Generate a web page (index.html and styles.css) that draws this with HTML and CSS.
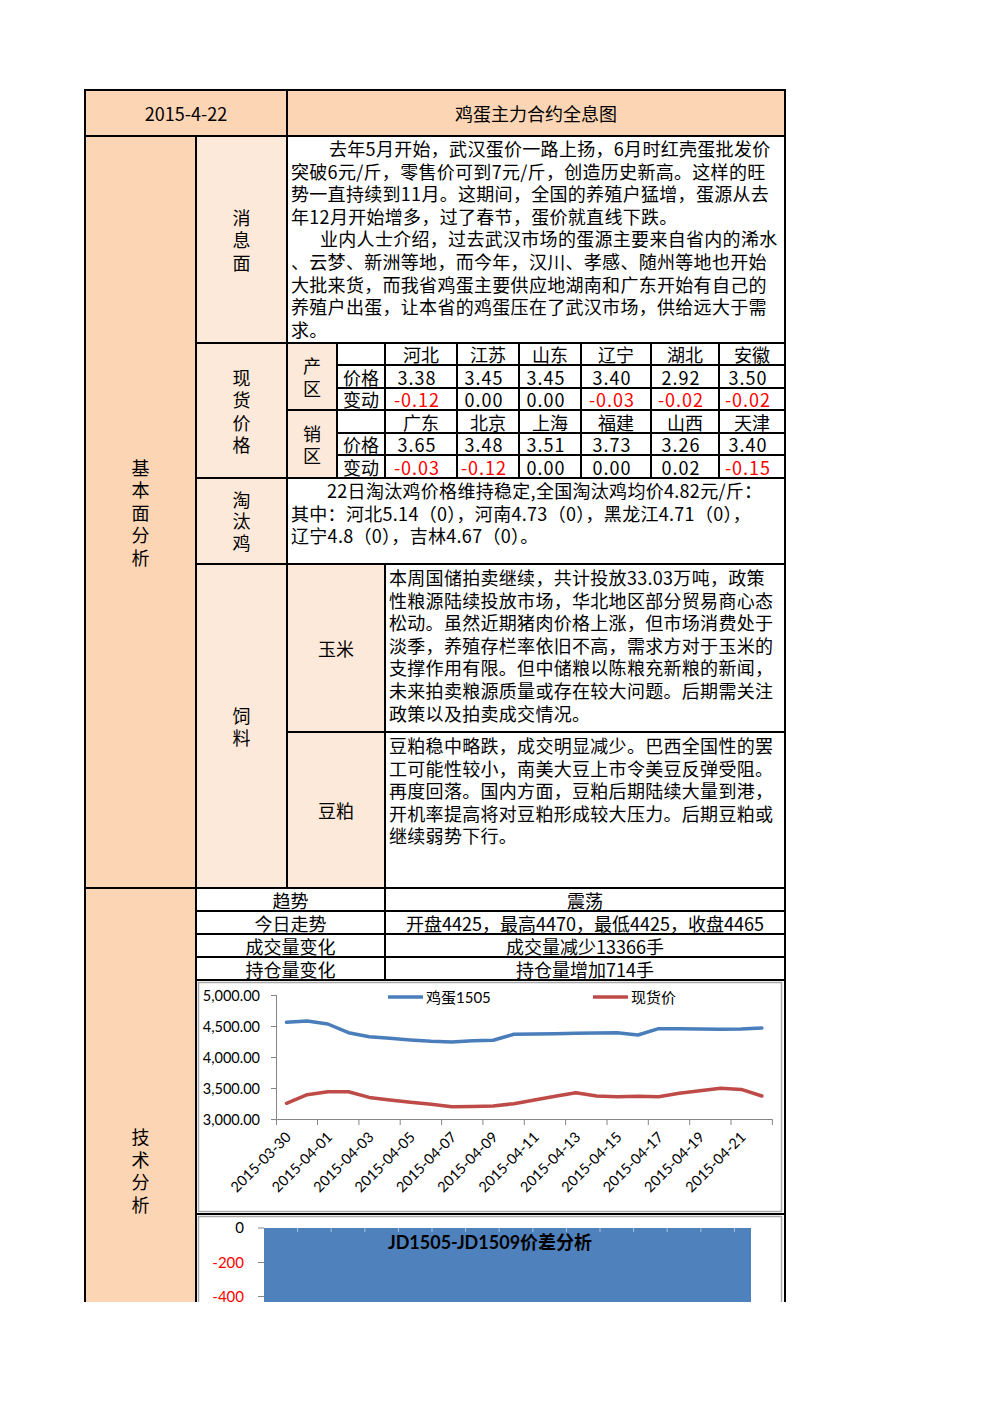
FILE: index.html
```html
<!DOCTYPE html>
<html lang="zh-CN">
<head>
<meta charset="utf-8">
<title>鸡蛋主力合约全息图</title>
<link rel="stylesheet" href="styles.css">
</head>
<body>
<div class="page">
<div class="clip">
<div class="sheet">
  <div class="c tan cs2">2015-4-22</div>
  <div class="c tan cs8">鸡蛋主力合约全息图</div>

  <div class="c tan rs10"><span class="v">基本面分析</span></div>
  <div class="c pale"><span class="v">消息面</span></div>
  <div class="c cs8 txt">
    <p class="i38">去年5月开始，武汉蛋价一路上扬，6月时红壳蛋批发价<br>突破6元/斤，零售价可到7元/斤，创造历史新高。这样的旺<br>势一直持续到11月。这期间，全国的养殖户猛增，蛋源从去<br>年12月开始增多，过了春节，蛋价就直线下跌。</p>
    <p class="i29">业内人士介绍，过去武汉市场的蛋源主要来自省内的浠水<br>、云梦、新洲等地，而今年，汉川、孝感、随州等地也开始<br>大批来货，而我省鸡蛋主要供应地湖南和广东开始有自己的<br>养殖户出蛋，让本省的鸡蛋压在了武汉市场，供给远大于需<br>求。</p>
  </div>

  <div class="c pale rs6"><span class="v">现货价格</span></div>
  <div class="c pale rs3"><span class="v">产区</span></div>
  <div class="c"></div>
  <div class="c">河北</div><div class="c">江苏</div><div class="c">山东</div><div class="c">辽宁</div><div class="c">湖北</div><div class="c">安徽</div>
  <div class="c">价格</div>
  <div class="c num">3.38</div><div class="c num">3.45</div><div class="c num">3.45</div><div class="c num">3.40</div><div class="c num">2.92</div><div class="c num">3.50</div>
  <div class="c">变动</div>
  <div class="c num neg">-0.12</div><div class="c num">0.00</div><div class="c num">0.00</div><div class="c num neg">-0.03</div><div class="c num neg">-0.02</div><div class="c num neg">-0.02</div>

  <div class="c pale rs3"><span class="v">销区</span></div>
  <div class="c"></div>
  <div class="c">广东</div><div class="c">北京</div><div class="c">上海</div><div class="c">福建</div><div class="c">山西</div><div class="c">天津</div>
  <div class="c">价格</div>
  <div class="c num">3.65</div><div class="c num">3.48</div><div class="c num">3.51</div><div class="c num">3.73</div><div class="c num">3.26</div><div class="c num">3.40</div>
  <div class="c">变动</div>
  <div class="c num neg">-0.03</div><div class="c num neg">-0.12</div><div class="c num">0.00</div><div class="c num">0.00</div><div class="c num">0.02</div><div class="c num neg">-0.15</div>

  <div class="c pale"><span class="v vs">淘汰鸡</span></div>
  <div class="c cs8 txt">
    <p class="i36">22日淘汰鸡价格维持稳定,全国淘汰鸡均价4.82元/斤：<br>其中：河北5.14（0），河南4.73（0），黑龙江4.71（0），<br>辽宁4.8（0），吉林4.67（0）。</p>
  </div>

  <div class="c pale rs2"><span class="v">饲料</span></div>
  <div class="c pale cs2">玉米</div>
  <div class="c cs6 txt">
    <p>本周国储拍卖继续，共计投放33.03万吨，政策<br>性粮源陆续投放市场，华北地区部分贸易商心态<br>松动。虽然近期猪肉价格上涨，但市场消费处于<br>淡季，养殖存栏率依旧不高，需求方对于玉米的<br>支撑作用有限。但中储粮以陈粮充新粮的新闻，<br>未来拍卖粮源质量或存在较大问题。后期需关注<br>政策以及拍卖成交情况。</p>
  </div>
  <div class="c pale cs2">豆粕</div>
  <div class="c cs6 txt">
    <p>豆粕稳中略跌，成交明显减少。巴西全国性的罢<br>工可能性较小，南美大豆上市令美豆反弹受阻。<br>再度回落。国内方面，豆粕后期陆续大量到港，<br>开机率提高将对豆粕形成较大压力。后期豆粕或<br>继续弱势下行。</p>
  </div>

  <div class="c tan rs6"><span class="v">技术分析</span></div>
  <div class="c cs3">趋势</div><div class="c cs6">震荡</div>
  <div class="c cs3">今日走势</div><div class="c cs6">开盘4425，最高4470，最低4425，收盘4465</div>
  <div class="c cs3">成交量变化</div><div class="c cs6">成交量减少13366手</div>
  <div class="c cs3">持仓量变化</div><div class="c cs6">持仓量增加714手</div>

  <div class="c cs9 chart">
    <svg width="587" height="232" viewBox="0 0 587 232">
      <rect x="1.5" y="1.5" width="583" height="229" fill="#fff" stroke="#a9a9a9" stroke-width="1.5"/>
      <g stroke="#868686" stroke-width="1">
        <line x1="79.5" y1="14" x2="79.5" y2="138.5"/>
        <line x1="74" y1="14.5" x2="79.5" y2="14.5"/>
        <line x1="74" y1="45.5" x2="79.5" y2="45.5"/>
        <line x1="74" y1="76.5" x2="79.5" y2="76.5"/>
        <line x1="74" y1="107.5" x2="79.5" y2="107.5"/>
        <line x1="74" y1="138.5" x2="79.5" y2="138.5"/>
        <line x1="79.5" y1="138.5" x2="575.5" y2="138.5"/>
        <line x1="79.5" y1="138.5" x2="79.5" y2="144"/>
        <line x1="120.5" y1="138.5" x2="120.5" y2="144"/>
        <line x1="161.9" y1="138.5" x2="161.9" y2="144"/>
        <line x1="203.2" y1="138.5" x2="203.2" y2="144"/>
        <line x1="244.6" y1="138.5" x2="244.6" y2="144"/>
        <line x1="285.9" y1="138.5" x2="285.9" y2="144"/>
        <line x1="327.3" y1="138.5" x2="327.3" y2="144"/>
        <line x1="368.6" y1="138.5" x2="368.6" y2="144"/>
        <line x1="410" y1="138.5" x2="410" y2="144"/>
        <line x1="451.3" y1="138.5" x2="451.3" y2="144"/>
        <line x1="492.7" y1="138.5" x2="492.7" y2="144"/>
        <line x1="534" y1="138.5" x2="534" y2="144"/>
        <line x1="575.4" y1="138.5" x2="575.4" y2="144"/>
      </g>
      <g class="axis-label" text-anchor="end">
        <text x="63" y="19.5">5,000.00</text>
        <text x="63" y="50.5">4,500.00</text>
        <text x="63" y="81.5">4,000.00</text>
        <text x="63" y="112.5">3,500.00</text>
        <text x="63" y="143.5">3,000.00</text>
      </g>
      <g class="axis-label" text-anchor="end">
        <text transform="translate(95 157) rotate(-45)">2015-03-30</text>
        <text transform="translate(136.3 157) rotate(-45)">2015-04-01</text>
        <text transform="translate(177.7 157) rotate(-45)">2015-04-03</text>
        <text transform="translate(219 157) rotate(-45)">2015-04-05</text>
        <text transform="translate(260.4 157) rotate(-45)">2015-04-07</text>
        <text transform="translate(301.7 157) rotate(-45)">2015-04-09</text>
        <text transform="translate(343 157) rotate(-45)">2015-04-11</text>
        <text transform="translate(384.4 157) rotate(-45)">2015-04-13</text>
        <text transform="translate(425.7 157) rotate(-45)">2015-04-15</text>
        <text transform="translate(467.1 157) rotate(-45)">2015-04-17</text>
        <text transform="translate(508.4 157) rotate(-45)">2015-04-19</text>
        <text transform="translate(549.7 157) rotate(-45)">2015-04-21</text>
      </g>
      <polyline fill="none" stroke="#4a7ebb" stroke-width="3.5" stroke-linejoin="round" stroke-linecap="round"
        points="89.5,41.3 110.2,40 130.8,43 151.5,51.7 172.2,55.7 192.9,57.3 213.5,59 234.2,60.3 254.9,61 275.5,59.7 296.2,59.3 316.9,53.3 337.5,53 358.2,52.7 378.9,52.3 399.6,52 420.2,51.7 440.9,54 461.6,47.7 482.2,47.7 502.9,48 523.6,48.3 544.2,48 564.9,47"/>
      <polyline fill="none" stroke="#be4b48" stroke-width="3.5" stroke-linejoin="round" stroke-linecap="round"
        points="89.5,122.3 110.2,113.7 130.8,110.7 151.5,110.7 172.2,116.4 192.9,119 213.5,121.3 234.2,123.3 254.9,125.7 275.5,125.4 296.2,125 316.9,122.7 337.5,119 358.2,115.3 378.9,111.7 399.6,115 420.2,115.7 440.9,115.3 461.6,115.7 482.2,112.3 502.9,109.7 523.6,107.3 544.2,108.4 564.9,115"/>
      <line x1="191" y1="16" x2="226" y2="16" stroke="#4a7ebb" stroke-width="3.5"/>
      <text class="legend" x="229" y="21.5">鸡蛋1505</text>
      <line x1="396" y1="16" x2="431" y2="16" stroke="#be4b48" stroke-width="3.5"/>
      <text class="legend" x="434" y="21.5">现货价</text>
    </svg>
  </div>

  <div class="c cs9 chart">
    <svg width="587" height="236" viewBox="0 0 587 236">
      <rect x="1.5" y="1.5" width="583" height="233" fill="#fff" stroke="#a9a9a9" stroke-width="1.5"/>
      <rect x="67" y="13" width="487" height="220" fill="#4f81bd"/>
      <g stroke="#a9c0df" stroke-width="1">
        <line x1="100.6" y1="13" x2="100.6" y2="17"/>
        <line x1="134.2" y1="13" x2="134.2" y2="17"/>
        <line x1="167.8" y1="13" x2="167.8" y2="17"/>
        <line x1="201.4" y1="13" x2="201.4" y2="17"/>
        <line x1="235" y1="13" x2="235" y2="17"/>
        <line x1="268.6" y1="13" x2="268.6" y2="17"/>
        <line x1="302.2" y1="13" x2="302.2" y2="17"/>
        <line x1="335.8" y1="13" x2="335.8" y2="17"/>
        <line x1="369.4" y1="13" x2="369.4" y2="17"/>
        <line x1="403" y1="13" x2="403" y2="17"/>
        <line x1="436.6" y1="13" x2="436.6" y2="17"/>
        <line x1="470.2" y1="13" x2="470.2" y2="17"/>
        <line x1="503.8" y1="13" x2="503.8" y2="17"/>
        <line x1="537.4" y1="13" x2="537.4" y2="17"/>
      </g>
      <g stroke="#868686" stroke-width="1">
        <line x1="61" y1="13" x2="67" y2="13"/>
        <line x1="61" y1="47.5" x2="67" y2="47.5"/>
        <line x1="61" y1="81.5" x2="67" y2="81.5"/>
      </g>
      <g class="axis-label2" text-anchor="end">
        <text x="47" y="18">0</text>
        <text class="red" x="47" y="52.5">-200</text>
        <text class="red" x="47" y="87">-400</text>
      </g>
      <text class="title" x="293" y="34" text-anchor="middle">JD1505-JD1509价差分析</text>
    </svg>
  </div>
</div>
</div>
</div>
</body>
</html>
```

FILE: styles.css
```css
* {
  box-sizing: border-box;
  margin: 0;
  padding: 0;
}

body {
  background: #fff;
  color: #000;
  font-family: "Noto Sans CJK SC", "Noto Sans", sans-serif;
  font-size: 18px;
}

.page {
  padding: 89px 0 0 84px;
}

.clip {
  width: 702px;
  height: 1213px;
  overflow: hidden;
}

.sheet {
  width: 702px;
  display: grid;
  grid-template-columns: 111px 91px 50px 48px 72px 62px 62px 70px 68px 66px;
  grid-template-rows: 46px 207px 22px 23px 22px 23px 22px 23px 86px 168px 156px 23px 23px 23px 23px 234px 238px;
  border-top: 2px solid #000;
  border-left: 2px solid #000;
}

.c {
  border-right: 2px solid #000;
  border-bottom: 2px solid #000;
  background: #fff;
  display: flex;
  align-items: center;
  justify-content: center;
  line-height: 20px;
  white-space: nowrap;
  min-width: 0;
  min-height: 0;
}

.tan { background: #fcd5b4; }
.pale { background: #fde9d9; }

.cs2 { grid-column: span 2; }
.cs3 { grid-column: span 3; }
.cs6 { grid-column: span 6; }
.cs8 { grid-column: span 8; }
.cs9 { grid-column: span 9; }
.rs2 { grid-row: span 2; }
.rs3 { grid-row: span 3; }
.rs6 { grid-row: span 6; }
.rs10 { grid-row: span 10; }

.v {
  display: block;
  width: 1.1em;
  white-space: normal;
  word-break: break-all;
  text-align: center;
  line-height: 22.5px;
}

.vs {
  line-height: 21.5px;
}

.num {
  letter-spacing: 1px;
  padding-right: 8px;
}

.neg {
  color: #ff0000;
}

.txt {
  display: block;
  padding: 0 0 0 3px;
  line-height: 22.6px;
  letter-spacing: 0.3px;
  text-align: left;
}

.cs6.txt {
  padding-top: 1px;
}

.i38 { text-indent: 38px; }
.i36 { text-indent: 36px; }
.i29 { text-indent: 29px; }

.chart {
  display: block;
  overflow: hidden;
}

.chart svg {
  display: block;
}

.axis-label {
  font-family: Lato, "Noto Sans CJK SC", sans-serif;
  font-size: 14.5px;
  fill: #000;
}

.axis-label2 {
  font-family: Lato, "Noto Sans CJK SC", sans-serif;
  font-size: 15px;
  fill: #000;
}

.axis-label2 .red {
  fill: #ff0000;
}

.legend {
  font-family: Lato, "Noto Sans CJK SC", sans-serif;
  font-size: 15px;
  fill: #000;
}

.title {
  font-family: Lato, "Noto Sans CJK SC", sans-serif;
  font-size: 18px;
  font-weight: bold;
  fill: #000;
}
```
